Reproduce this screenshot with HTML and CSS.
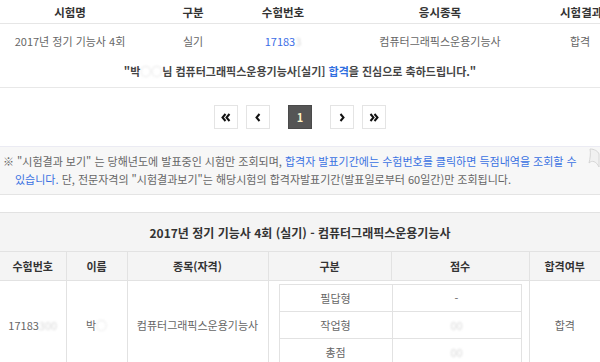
FILE: index.html
```html
<!DOCTYPE html>
<html lang="ko">
<head>
    <meta charset="UTF-8">
    <meta name="viewport" content="width=device-width, initial-scale=1.0">
    <title>시험결과 조회</title>
    <link rel="stylesheet" href="styles.css">
</head>
<body>

    <table class="result-table">
        <colgroup>
            <col style="width:140px"><col style="width:106px"><col style="width:74px"><col style="width:240px"><col style="width:40px">
        </colgroup>
        <thead>
            <tr><th>시험명</th><th>구분</th><th>수험번호</th><th>응시종목</th><th>시험결과</th></tr>
        </thead>
        <tbody>
            <tr>
                <td>2017년 정기 기능사 4회</td>
                <td>실기</td>
                <td class="num"><a href="#">17183<span class="blur">3</span></a></td>
                <td>컴퓨터그래픽스운용기능사</td>
                <td>합격</td>
            </tr>
        </tbody>
    </table>

    <p class="congrats">"박<span class="blur">○○</span>님 컴퓨터그래픽스운용기능사[실기] <em>합격</em>을 진심으로 축하드립니다."</p>

    <div class="pager">
        <a href="#" class="page-btn">
            <svg width="10" height="9" viewBox="0 0 10 9"><path d="M4.5 1 L1.5 4.5 L4.5 8 M8.5 1 L5.5 4.5 L8.5 8" fill="none" stroke="#111" stroke-width="2"/></svg>
        </a>
        <a href="#" class="page-btn">
            <svg width="6" height="9" viewBox="0 0 6 9"><path d="M4.5 1 L1.5 4.5 L4.5 8" fill="none" stroke="#111" stroke-width="2"/></svg>
        </a>
        <a href="#" class="page-btn current">1</a>
        <a href="#" class="page-btn">
            <svg width="6" height="9" viewBox="0 0 6 9"><path d="M1.5 1 L4.5 4.5 L1.5 8" fill="none" stroke="#111" stroke-width="2"/></svg>
        </a>
        <a href="#" class="page-btn">
            <svg width="10" height="9" viewBox="0 0 10 9"><path d="M1.5 1 L4.5 4.5 L1.5 8 M5.5 1 L8.5 4.5 L5.5 8" fill="none" stroke="#111" stroke-width="2"/></svg>
        </a>
    </div>

    <div class="notice">
        <p>※ "시험결과 보기" 는 당해년도에 발표중인 시험만 조회되며, <span class="hl">합격자 발표기간에는 수험번호를 클릭하면 득점내역을 조회할 수</span></p>
        <p class="indent"><span class="hl">있습니다.</span> 단, 전문자격의 "시험결과보기"는 해당시험의 합격자발표기간(발표일로부터 60일간)만 조회됩니다.</p>
        <svg class="curl" width="12" height="20" viewBox="0 0 12 20">
            <path d="M2 1 C6 1 10 3 11 6 L11 19 C8 13 4 12 1 15 C2 11 3 5 2 1 Z" fill="#f1f1f1" stroke="#d6d6d6" stroke-width="1"/>
        </svg>
    </div>

    <table class="detail-table">
        <colgroup>
            <col style="width:66px"><col style="width:61px"><col style="width:141px"><col style="width:123px"><col style="width:138px"><col style="width:71px">
        </colgroup>
        <thead>
            <tr><th colspan="6" class="title">2017년 정기 기능사 4회 (실기) - 컴퓨터그래픽스운용기능사</th></tr>
            <tr><th>수험번호</th><th>이름</th><th>종목(자격)</th><th>구분</th><th>점수</th><th>합격여부</th></tr>
        </thead>
        <tbody>
            <tr>
                <td>17183<span class="blur">300</span></td>
                <td>박<span class="blur">○</span></td>
                <td>컴퓨터그래픽스운용기능사</td>
                <td colspan="2" class="score-cell">
                    <table class="score-table">
                        <colgroup><col style="width:113px"><col style="width:129px"></colgroup>
                        <tr><td>필답형</td><td>-</td></tr>
                        <tr><td>작업형</td><td><span class="blur">00</span></td></tr>
                        <tr><td>총점</td><td><span class="blur">00</span></td></tr>
                    </table>
                </td>
                <td>합격</td>
            </tr>
        </tbody>
    </table>

</body>
</html>
```
FILE: styles.css
```css
/* Base Styles */
body {
    margin: 0;
    width: 600px;
    overflow: hidden;
    font-family: "Noto Sans CJK KR", "Noto Sans", sans-serif;
    font-size: 11px;
    color: #666;
    background-color: #fff;
}
a {
    text-decoration: none;
}
.blur {
    color: #d8d8d8;
    filter: blur(1.2px);
}

/* Top result table */
.result-table {
    width: 600px;
    table-layout: fixed;
    border-collapse: collapse;
}
.result-table th,
.result-table td {
    text-align: center;
    white-space: nowrap;
    padding: 0;
}
.result-table th {
    height: 23px;
    font-size: 11.5px;
    color: #333;
    border-bottom: 1px solid #e6e6e6;
}
.result-table td {
    height: 34px;
}
.result-table .num a {
    color: #3b6de6;
}

.congrats {
    margin: 0;
    height: 29px;
    line-height: 27px;
    text-align: center;
    font-weight: bold;
    color: #444;
    border-bottom: 1px solid #e8e8e8;
}
.congrats em {
    font-style: normal;
    color: #2f6fe0;
}

/* Pagination */
.pager {
    display: flex;
    justify-content: center;
    gap: 8px;
    padding: 17px 0 17px;
    border-bottom: 1px solid #ebebf3;
}
.page-btn {
    display: flex;
    align-items: center;
    justify-content: center;
    width: 22px;
    height: 22px;
    border: 1px solid #e4e4e4;
    background-color: #fff;
    color: #111;
    font-weight: bold;
}
.page-btn.current {
    margin: 0 10px;
    background-color: #555;
    border-color: #4a4a4a;
    color: #fdf3c8;
}

/* Notice box */
.notice {
    position: relative;
    margin: 0;
    padding: 5px 0 6px 3px;
    background-color: #f7f7f7;
    border-bottom: 1px solid #e4e4e4;
    color: #666;
}
.notice p {
    margin: 0;
    line-height: 18px;
}
.notice .indent {
    padding-left: 12px;
}
.notice .hl {
    color: #3a72e2;
}
.notice .curl {
    position: absolute;
    top: 1px;
    right: 0;
}

/* Detail table */
.detail-table {
    width: 600px;
    margin-top: 17px;
    table-layout: fixed;
    border-collapse: collapse;
    border-top: 1px solid #e2e2e2;
}
.detail-table th,
.detail-table td {
    text-align: center;
    white-space: nowrap;
    padding: 0;
    border: 1px solid #e2e2e2;
}
.detail-table tr > :first-child {
    border-left: none;
}
.detail-table tr > :last-child {
    border-right: none;
}
.detail-table th {
    background-color: #f4f4f4;
    color: #333;
    height: 28px;
}
.detail-table th.title {
    height: 38px;
    font-size: 12px;
    border-left: none;
    border-right: none;
}
.detail-table td {
    color: #666;
}
.detail-table .score-cell {
    padding: 3px 8px 3px 10px;
}
.score-table {
    width: 242px;
    table-layout: fixed;
    border-collapse: collapse;
}
.detail-table .score-table td {
    height: 26px;
    border: 1px solid #e2e2e2;
}
.detail-table .score-table tr > :first-child {
    border-left: 1px solid #e2e2e2;
}
.detail-table .score-table tr > :last-child {
    border-right: 1px solid #e2e2e2;
}
```
